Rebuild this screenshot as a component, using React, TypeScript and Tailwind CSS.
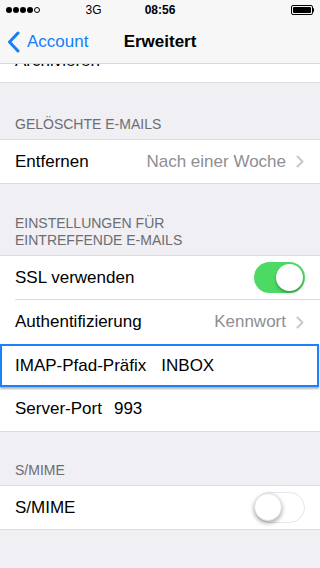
import React from "react";

const font = { fontFamily: '"Liberation Sans", Arial, sans-serif' };

function Chevron() {
  return (
    <svg width="8" height="13" viewBox="0 0 8 13" className="ml-[10px]">
      <path d="M1.5 1.5 L6.5 6.5 L1.5 11.5" fill="none" stroke="#c7c7cc" strokeWidth="2" strokeLinecap="round" strokeLinejoin="round" />
    </svg>
  );
}

function Toggle({ on }: { on: boolean }) {
  return on ? (
    <div className="relative w-[51px] h-[31px] rounded-full bg-[#4cd964]">
      <div className="absolute right-[2px] top-[2px] w-[27px] h-[27px] rounded-full bg-white shadow-[0_2px_3px_rgba(0,0,0,0.3)]" />
    </div>
  ) : (
    <div className="relative w-[51px] h-[31px] rounded-full bg-white border border-[#e5e5ea]">
      <div className="absolute left-[-1px] top-[0px] w-[28px] h-[28px] rounded-full bg-white shadow-[0_2px_4px_rgba(0,0,0,0.35)] border border-[#e0e0e0]" />
    </div>
  );
}

function Header({ children }: { children: React.ReactNode }) {
  return (
    <div className="px-[15px] pb-[6px] text-[14px] leading-[17px] text-[#6d6d72] uppercase">{children}</div>
  );
}

export default function App() {
  return (
    <div className="w-[320px] h-[568px] overflow-hidden bg-[#efeff4] text-black" style={font}>
      {/* status bar + nav */}
      <div className="bg-[#f7f7f8] border-b border-[#d9d9dc]">
        <div className="relative h-[20px] flex items-center text-[12px]">
          <div className="flex items-center gap-[1.5px] ml-[6px]">
            {[0, 1, 2, 3].map((i) => (
              <div key={i} className="w-[5.5px] h-[5.5px] rounded-full bg-black" />
            ))}
            <div className="w-[5.5px] h-[5.5px] rounded-full border border-black" />
          </div>
          <div className="ml-[46px]">3G</div>
          <div className="absolute left-0 right-0 text-center font-bold pointer-events-none">08:56</div>
          <div className="ml-auto mr-[6px] flex items-center">
            <div className="w-[22px] h-[10px] border border-black rounded-[2px] p-[1px]">
              <div className="w-full h-full bg-black rounded-[1px]" />
            </div>
            <div className="w-[1.5px] h-[4px] bg-black rounded-r" />
          </div>
        </div>
        <div className="relative h-[43px] flex items-center">
          <svg width="13" height="22" viewBox="0 0 13 22" className="ml-[7px]">
            <path d="M11 2 L2.5 11 L11 20" fill="none" stroke="#157efb" strokeWidth="3" strokeLinecap="round" strokeLinejoin="round" />
          </svg>
          <span className="ml-[7px] text-[17px] text-[#157efb]">Account</span>
          <div className="absolute left-0 right-0 text-center text-[17px] font-bold pointer-events-none">Erweitert</div>
        </div>
      </div>

      {/* clipped Archivieren row */}
      <div className="h-[19px] overflow-hidden bg-white border-b border-[#dcdce0]">
        <div className="mt-[-25px] h-[44px] flex items-center px-[15px] text-[17px]">Archivieren</div>
      </div>

      <div className="pt-[33px]">
        <Header>Gelöschte E-Mails</Header>
      </div>
      <div className="bg-white border-y border-[#dcdce0]">
        <div className="h-[43px] flex items-center pl-[15px] pr-[16px] text-[17px]">
          <span>Entfernen</span>
          <span className="ml-auto text-[#8e8e93]">Nach einer Woche</span>
          <Chevron />
        </div>
      </div>

      <div className="pt-[31px]">
        <Header>
          Einstellungen für
          <br />
          eintreffende E-Mails
        </Header>
      </div>
      <div className="bg-white border-y border-[#dcdce0]">
        <div className="pl-[15px]">
          <div className="h-[44px] flex items-center pr-[15px] text-[17px] border-b border-[#dcdce0]">
            <span>SSL verwenden</span>
            <div className="ml-auto">
              <Toggle on />
            </div>
          </div>
        </div>
        <div className="h-[44px] flex items-center pl-[15px] pr-[16px] text-[17px]">
          <span>Authentifizierung</span>
          <span className="ml-auto text-[#8e8e93]">Kennwort</span>
          <Chevron />
        </div>
        <div className="h-[43px] mr-[1px] flex items-center pl-[13px] text-[17px] border-2 border-[#1a82fb] shadow-[0_2px_2px_rgba(0,0,0,0.3)] relative">
          <span>IMAP-Pfad-Präfix</span>
          <span className="ml-[15px]">INBOX</span>
        </div>
        <div className="h-[44px] flex items-center pl-[15px] text-[17px]">
          <span>Server-Port</span>
          <span className="ml-[12px]">993</span>
        </div>
      </div>

      <div className="pt-[30px]">
        <Header>S/MIME</Header>
      </div>
      <div className="bg-white border-y border-[#dcdce0]">
        <div className="h-[43px] flex items-center pl-[15px] pr-[15px] text-[17px]">
          <span>S/MIME</span>
          <div className="ml-auto">
            <Toggle on={false} />
          </div>
        </div>
      </div>
    </div>
  );
}
